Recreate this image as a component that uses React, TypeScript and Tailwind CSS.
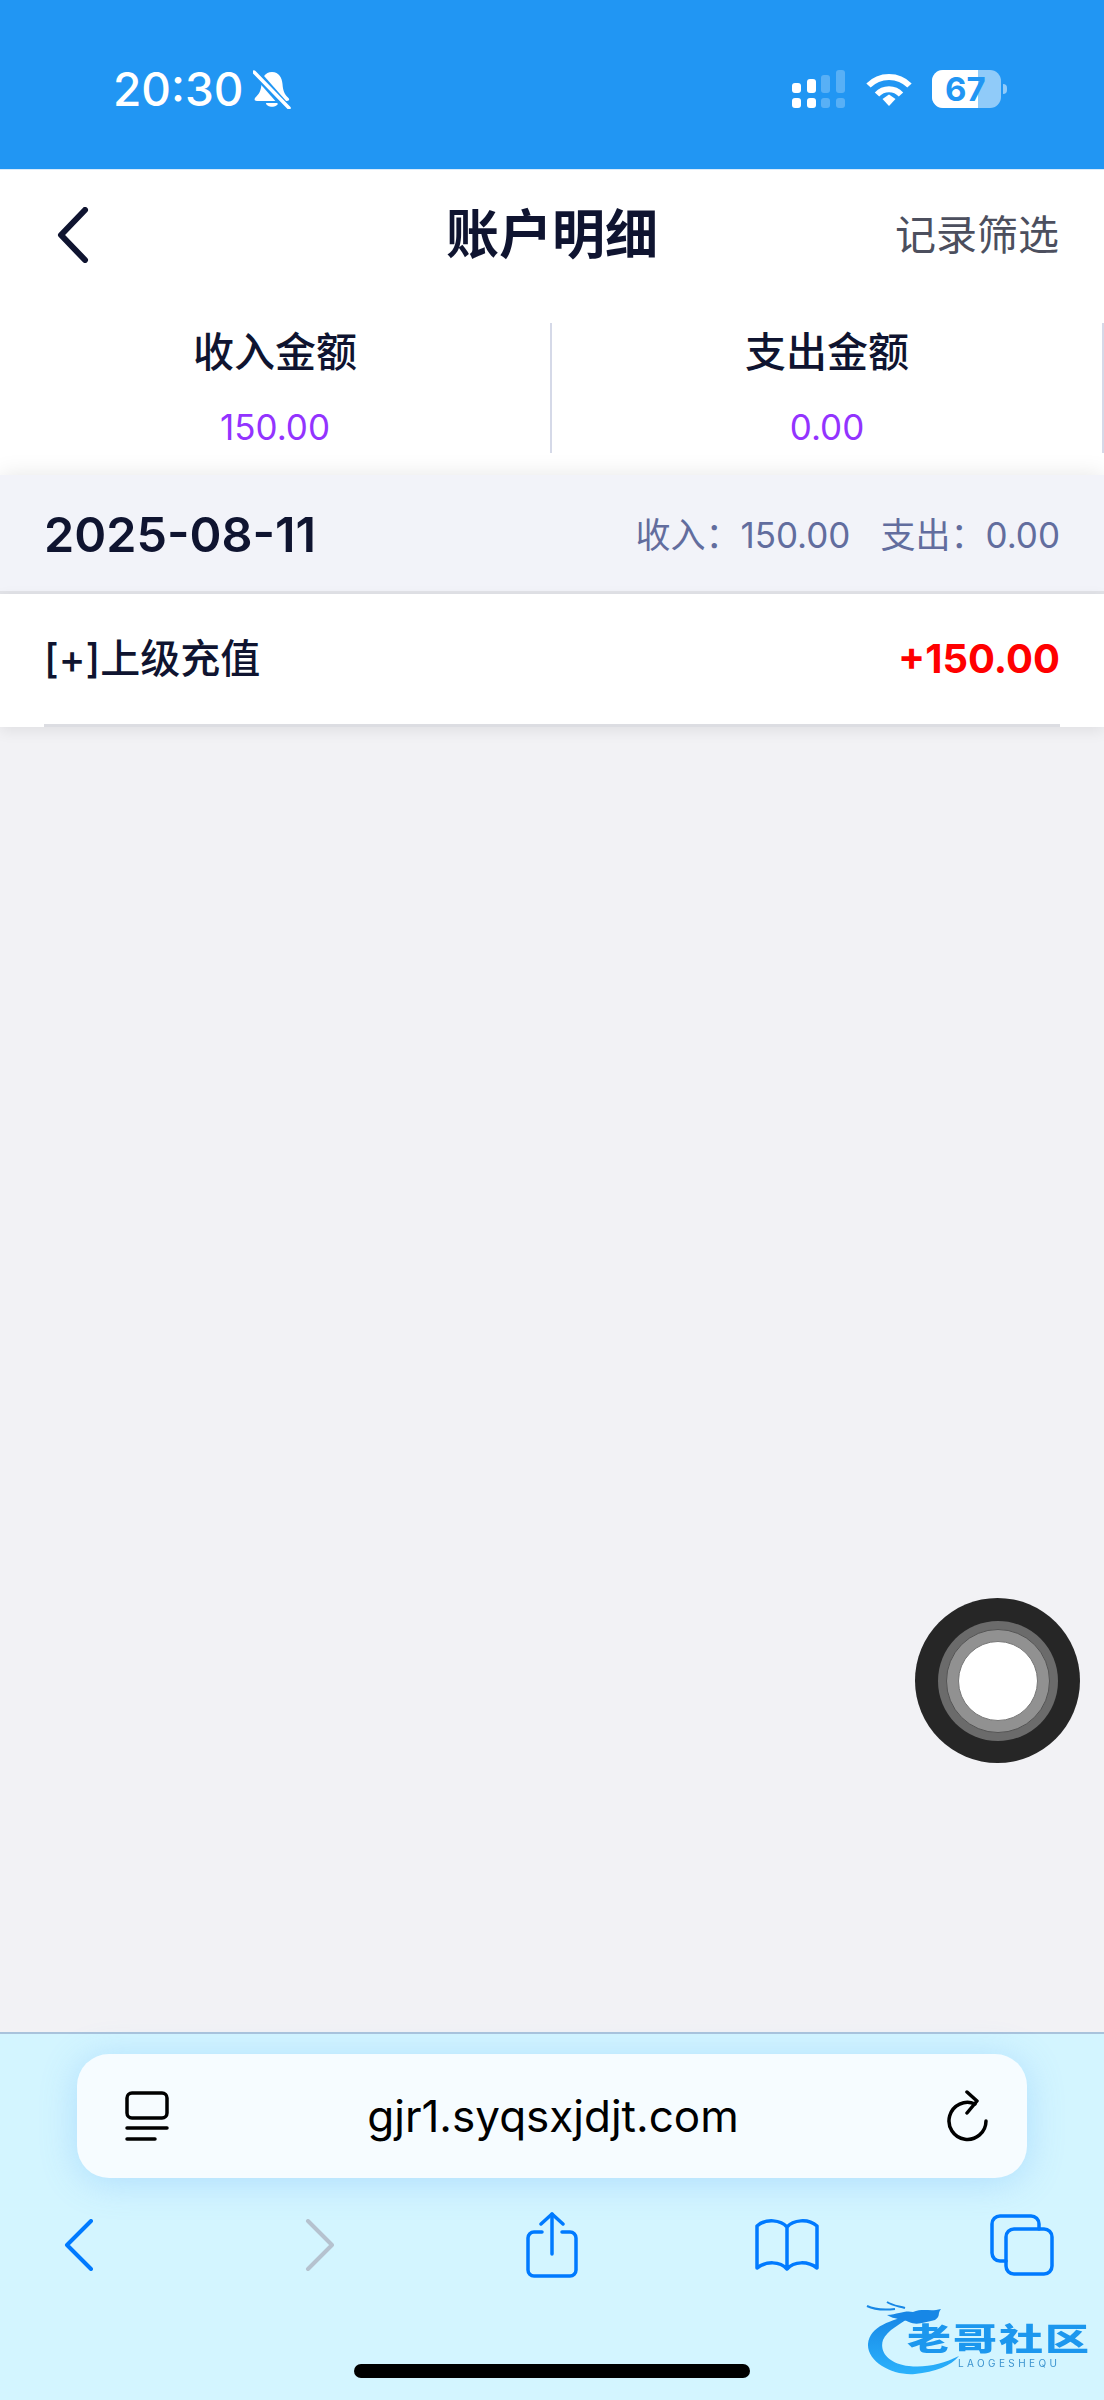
const CJK = "font-['Inter','Noto_Sans_CJK_SC',sans-serif]";

function SignalIcon() {
  return (
    <svg width="53" height="38" viewBox="0 0 53 38" fill="white">
      <rect x="0" y="13" width="9" height="10" rx="3" />
      <rect x="15" y="9" width="9" height="14" rx="3" />
      <rect x="29" y="5" width="9" height="18" rx="3" fillOpacity="0.25" />
      <rect x="44" y="0" width="9" height="23" rx="3" fillOpacity="0.25" />
      <rect x="0" y="28" width="9" height="10" rx="3" />
      <rect x="15" y="28" width="9" height="10" rx="3" />
      <rect x="29" y="28" width="9" height="10" rx="3" fillOpacity="0.25" />
      <rect x="44" y="28" width="9" height="10" rx="3" fillOpacity="0.25" />
    </svg>
  );
}

function WifiIcon() {
  return (
    <svg width="46" height="34" viewBox="0 0 46 34" fill="none" stroke="white" strokeWidth="6">
      <path d="M2.5 13.5C13.5 2 32.500 2 43.500 13.500" />
      <path d="M11 22.500C17.500 15.500 28.500 15.500 35 22.500" />
      <path d="M16.500 27L23 22.500L29.500 27L23 34Z" fill="white" stroke="none" />
    </svg>
  );
}

function Battery() {
  return (
    <div className="relative flex items-center ml-[20px]">
      <div className="w-[69px] h-[38px] rounded-[11px] overflow-hidden flex bg-white/50">
        <div className="w-[46px] h-full bg-white" />
      </div>
      <div className="w-[4px] h-[10px] ml-[2px] rounded-r-full bg-white/50" />
      <span className="absolute left-[13px] top-0 leading-[38px] text-[33px] font-bold text-[#2196f3] font-['Inter',sans-serif]">67</span>
    </div>
  );
}

function MutedBell() {
  return (
    <svg width="38" height="39" viewBox="0 0 38 39" className="ml-[9px]">
      <path d="M19 2C12 2 9 8 8.500 14C8 21 6 24 2 28C1 30 2 31 4 31H33C36 31 37 30 35.500 28C31 24 30 20 29.500 14C29 8 26 2 19 2Z" fill="white" />
      <path d="M13 33H25C24.500 38 13.500 38 13 33Z" fill="white" />
      <path d="M3 3L33 37" stroke="#2196f3" strokeWidth="8" />
      <path d="M1 2L36 38" stroke="white" strokeWidth="3.500" strokeLinecap="round" />
    </svg>
  );
}

function AssistiveTouch() {
  return (
    <div className="absolute left-[915px] top-[1598px] w-[165px] h-[165px] rounded-full bg-[#262626] flex items-center justify-center">
      <div className="w-[120px] h-[120px] rounded-full bg-[#6b6b6b] flex items-center justify-center">
        <div className="w-[104px] h-[104px] rounded-full bg-[#919191] border border-[#555555] flex items-center justify-center">
          <div className="w-[80px] h-[80px] rounded-full bg-white border border-[#777777]" />
        </div>
      </div>
    </div>
  );
}

function CommunityMark() {
  return (
    <div className="absolute left-[865px] top-[2300px] w-[225px] h-[76px] blur-[0.7px]">
      <svg width="110" height="76" viewBox="0 0 110 76" className="absolute left-0 top-0">
        <defs>
          <linearGradient id="ring" x1="0" y1="0" x2="0" y2="1">
            <stop offset="0" stopColor="#1787e6" />
            <stop offset="1" stopColor="#2bb2fc" />
          </linearGradient>
        </defs>
        <path d="M48 15C26 20 5 26 3 44C2 62 28 76 50 74C70 72 86 66 94 56C78 64 60 68 44 66C24 64 14 52 18 40C22 30 36 24 48 15Z" fill="url(#ring)" />
        <path d="M22 15C34 14 40 10 48 12C58 8 66 12 76 9C72 14 76 16 70 20C60 22 52 26 44 22C36 18 30 20 22 15Z" fill="#1787e6" />
        <path d="M2 6C10 10 20 10 30 9M22 2C28 6 34 6 40 8" stroke="#1787e6" strokeWidth="2" fill="none" />
      </svg>
      <span className="absolute left-[42px] top-[27px] text-[44px] leading-[28px] font-black tracking-[2px] whitespace-nowrap origin-top scale-y-[0.7] text-[#1c97ee] font-['Noto_Sans_CJK_SC',sans-serif]">老哥社区</span>
      <span className="absolute left-[93px] top-[57px] text-[10px] leading-[12px] tracking-[3.4px] whitespace-nowrap text-[#3b93cf] font-['Inter',sans-serif]">LAOGESHEQU</span>
    </div>
  );
}

export default function App() {
  return (
    <div className={`relative w-[1104px] h-[2400px] flex flex-col bg-[#f2f2f5] overflow-hidden ${CJK}`}>
      {/* status bar */}
      <div className="h-[170px] shrink-0 bg-[#2196f3] border-b border-[#d7ebfb] flex items-start pl-[113px] pt-[70px]">
        <span className="text-[46px] leading-[38px] font-medium text-white font-['Inter',sans-serif]">20:30</span>
        <MutedBell />
        <div className="ml-auto flex items-start pr-[97px]">
          <SignalIcon />
          <div className="ml-[21px] mt-[2px]"><WifiIcon /></div>
          <Battery />
        </div>
      </div>

      {/* nav */}
      <div className="h-[130px] shrink-0 bg-white relative flex items-center justify-center">
        <button className="absolute left-[57px] top-[37px]" aria-label="back">
          <svg width="34" height="56" viewBox="0 0 34 56" fill="none" stroke="#0f1430" strokeWidth="6" strokeLinecap="round" strokeLinejoin="round" className="block">
            <path d="M28 3L4 28L28 53" />
          </svg>
        </button>
        <h1 className="text-[53px] leading-[64px] font-bold text-[#0f1430] -mt-[1px]">账户明细</h1>
        <span className="absolute right-[45px] top-[40px] text-[41px] leading-[50px] text-[#4c4f5e]">记录筛选</span>
      </div>

      {/* totals */}
      <div className="h-[175px] shrink-0 bg-white grid grid-cols-2 items-start">
        <div className="mt-[23px] h-[130px] border-r-2 border-[#d5d9e8] flex flex-col items-center">
          <span className="text-[41px] leading-[58px] font-medium text-[#0f1430]">收入金额</span>
          <span className="mt-[26px] text-[35px] leading-[40px] text-[#9333ff]">150.00</span>
        </div>
        <div className="mt-[23px] h-[130px] border-r-2 border-[#d5d9e8] flex flex-col items-center">
          <span className="text-[41px] leading-[58px] font-medium text-[#0f1430]">支出金额</span>
          <span className="mt-[26px] text-[35px] leading-[40px] text-[#9333ff]">0.00</span>
        </div>
      </div>

      {/* day group */}
      <div className="relative shrink-0 h-[119px] pt-[3px] bg-[#f2f3f9] border-b-[3px] border-[#e2e3e8] shadow-[0_0_22px_rgba(0,0,0,0.1)] flex items-center justify-between px-[44px]">
        <span className="text-[48.500px] leading-[56px] font-semibold text-[#0f1430]">2025-08-11</span>
        <div className="flex items-center gap-[30px] text-[35px] leading-[44px] text-[#626d9e]">
          <span>收入：150.00</span>
          <span>支出：0.00</span>
        </div>
      </div>

      <div className="relative shrink-0 bg-white shadow-[0_4px_14px_rgba(0,0,0,0.08)] px-[44px]">
        <div className="h-[133px] border-b-[3px] border-[#dcdde2] flex items-center justify-between">
          <span className="text-[40px] leading-[50px] font-medium text-[#0f1430]">[+]上级充值</span>
          <span className="text-[40px] leading-[50px] font-bold text-[#ff0000]">+150.00</span>
        </div>
      </div>

      <div className="flex-1" />

      {/* browser toolbar */}
      <div className="relative h-[368px] shrink-0 bg-[#d3f5ff] border-t-2 border-[#a9c3dc]">
        <div className="mt-[20px] mx-[77px] h-[124px] rounded-[32px] bg-[#f6fcff] shadow-[0_4px_36px_rgba(90,170,250,0.3)] flex items-center justify-between pl-[48px] pr-[38px]">
          <svg width="44" height="50" viewBox="0 0 44 50" fill="none" stroke="black" strokeWidth="3.500" strokeLinecap="round">
            <rect x="2" y="2" width="40" height="25" rx="5" />
            <path d="M2 37H42" />
            <path d="M2 48H30" />
          </svg>
          <span className="text-[44px] leading-[56px] -translate-x-[4px] text-black font-['Inter',sans-serif]">gjr1.syqsxjdjt.com</span>
          <svg width="44" height="52" viewBox="0 0 44 52" fill="none" stroke="black" strokeWidth="3.500" strokeLinecap="round" strokeLinejoin="round">
            <path d="M22 2L32 11L22 23" />
            <path d="M30 14A18.500 18.500 0 1 0 41 31" />
          </svg>
        </div>

        <div className="mt-[34px] flex items-center h-[66px]">
          <svg width="30" height="52" viewBox="0 0 30 52" fill="none" stroke="#007aff" strokeWidth="4" strokeLinecap="round" strokeLinejoin="round" className="ml-[64px]">
            <path d="M27 2L3 26L27 50" />
          </svg>
          <svg width="30" height="52" viewBox="0 0 30 52" fill="none" stroke="#b5c2cf" strokeWidth="4" strokeLinecap="round" strokeLinejoin="round" className="ml-[211px]">
            <path d="M3 2L27 26L3 50" />
          </svg>
          <svg width="52" height="66" viewBox="0 0 52 66" fill="none" stroke="#007aff" strokeWidth="3.500" strokeLinecap="round" strokeLinejoin="round" className="ml-[191px]">
            <path d="M16 20H8A6 6 0 0 0 2 26V58A6 6 0 0 0 8 64H44A6 6 0 0 0 50 58V26A6 6 0 0 0 44 20H36" />
            <path d="M26 2V42" />
            <path d="M15 12L26 2L37 12" />
          </svg>
          <svg width="66" height="54" viewBox="0 0 66 54" fill="none" stroke="#007aff" strokeWidth="3.500" strokeLinecap="round" strokeLinejoin="round" className="ml-[176px]">
            <path d="M33 9C27 2 12 0 3 8V50C12 43 26 43 33 51C40 43 54 43 63 50V8C54 0 39 2 33 9V51" />
          </svg>
          <svg width="64" height="62" viewBox="0 0 64 62" fill="none" stroke="#007aff" strokeWidth="3.500" strokeLinecap="round" strokeLinejoin="round" className="ml-[170px]">
            <rect x="16" y="15" width="46" height="45" rx="8" />
            <path d="M49 15V10A8 8 0 0 0 41 2H10A8 8 0 0 0 2 10V39A8 8 0 0 0 10 47H16" />
          </svg>
        </div>

        <div className="absolute left-[354px] top-[330px] w-[396px] h-[14px] rounded-full bg-black" />
      </div>

      <AssistiveTouch />
      <CommunityMark />
    </div>
  );
}
